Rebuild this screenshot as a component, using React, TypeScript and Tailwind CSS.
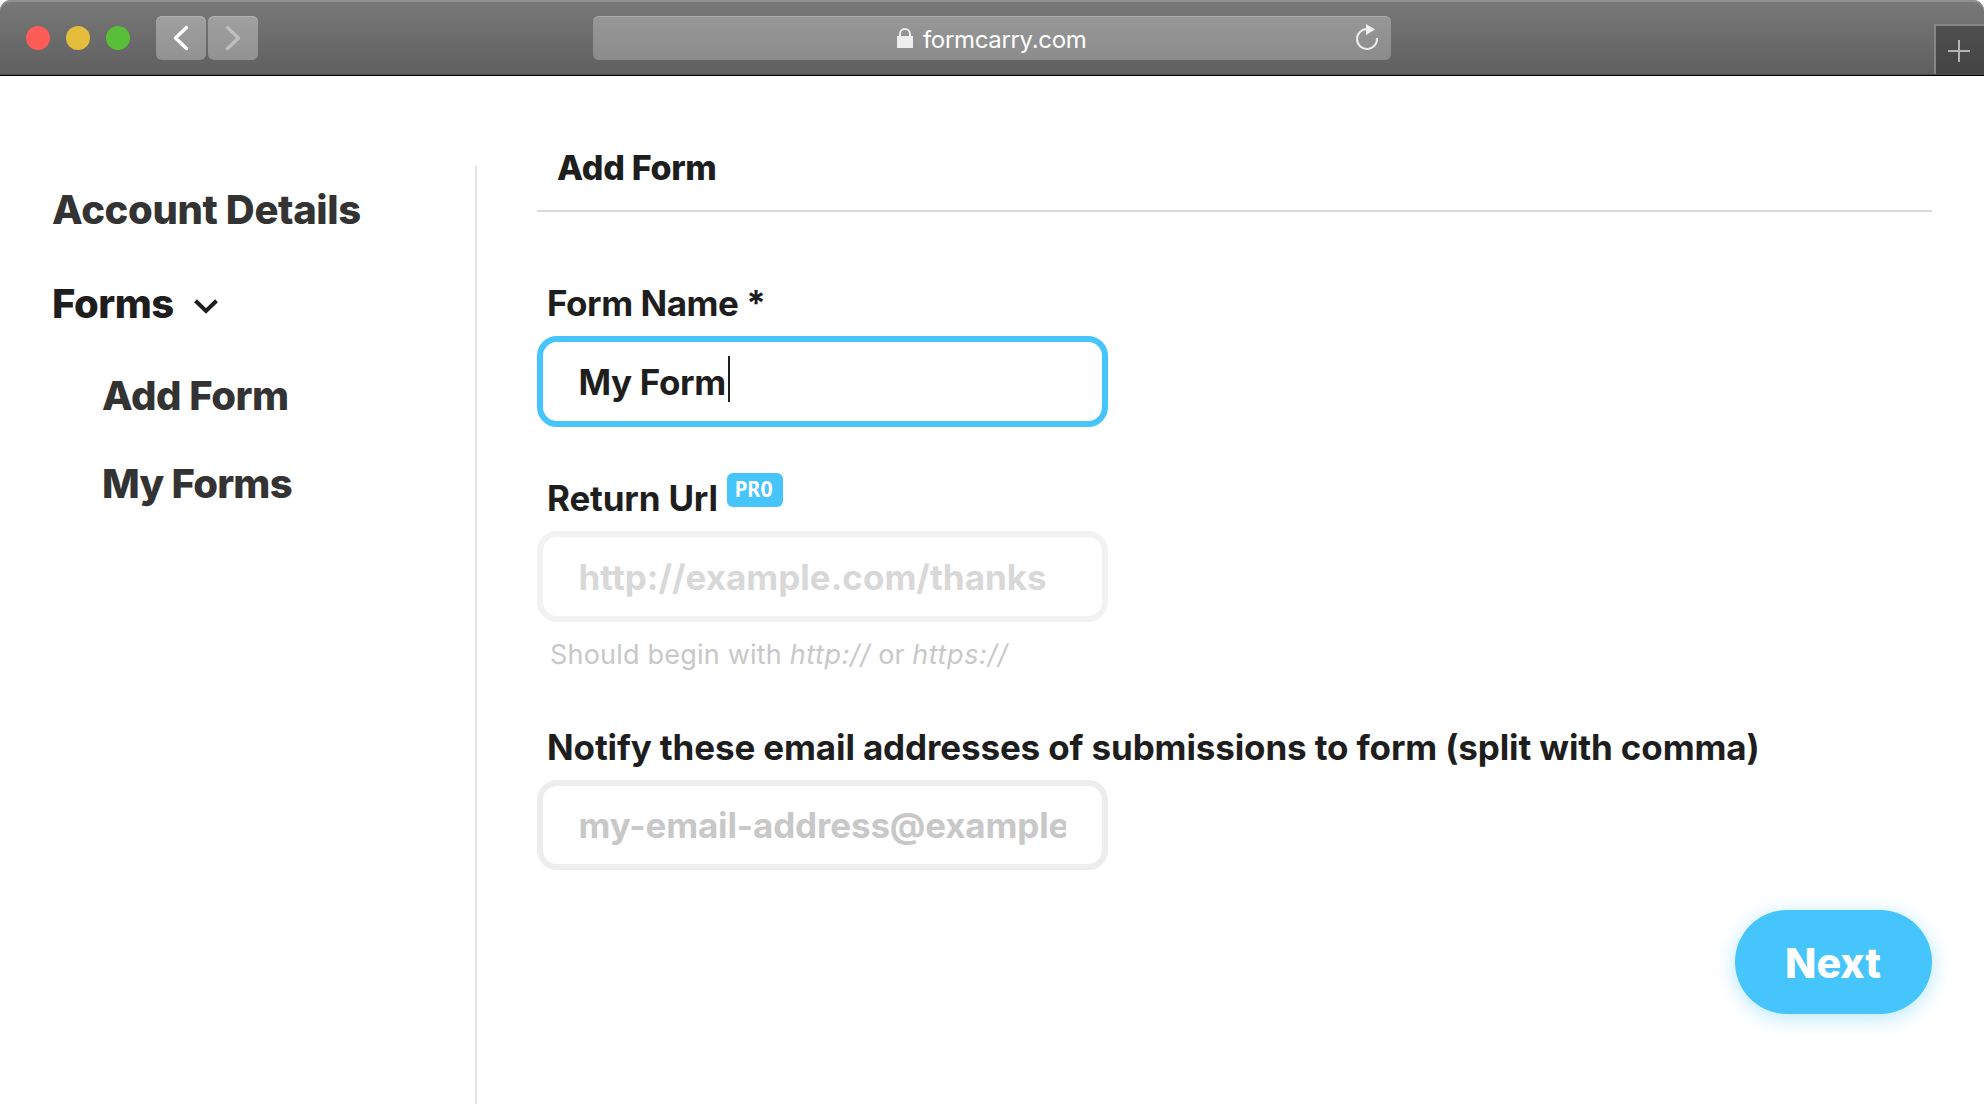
import type { ReactNode } from "react";

function BrowserBar() {
  return (
    <header className="flex h-[76px] shrink-0 items-start rounded-t-[11px] border-b border-black bg-linear-to-b from-[#797979] to-[#5f5f5f] shadow-[inset_0_2px_0_#919191,inset_0_-1px_0_#4c4c4c]">
      <div className="flex h-[76px] w-[593px] shrink-0 items-center pl-[26px]">
        <div className="flex gap-4">
          <span className="size-6 rounded-full bg-[#ff5b57]" />
          <span className="size-6 rounded-full bg-[#e4bd3c]" />
          <span className="size-6 rounded-full bg-[#57c038]" />
        </div>
        <div className="ml-[26px] flex gap-0.5">
          <NavButton color="#ffffff" d="M30.500 11.500 19.500 22 30.500 32.500" />
          <NavButton color="#bebebe" d="M19.500 11.500 30.500 22 19.500 32.500" />
        </div>
      </div>
      <div className="mt-4 flex h-11 w-[798px] shrink-0 items-center rounded-md bg-linear-to-b from-[#979797] to-[#8c8c8c] pr-3 shadow-[inset_0_1px_0_#acacac]">
        <div className="flex flex-1 items-center pl-[304px]">
          <svg width="16" height="20" viewBox="0 0 16 20">
            <path d="M3 9V6a5 5 0 0 1 10 0v3" fill="none" stroke="#eeeeee" strokeWidth="2" />
            <path d="M0 8h16v12H0z" fill="#eeeeee" />
          </svg>
          <span className="ml-2.5 pt-[3px] text-[24px] leading-[29px] tracking-[-0.33px] text-white">formcarry.com</span>
        </div>
        <svg width="24" height="28" viewBox="0 0 24 28">
          <path d="M22 14a10 10 0 1 1-10-9" fill="none" stroke="#eeeeee" strokeWidth="2" />
          <path d="M11 0v11l9-5.500z" fill="#eeeeee" />
        </svg>
      </div>
      <div className="mt-6 ml-auto flex h-[50px] w-[50px] items-center justify-center border-t-2 border-l-2 border-[#868686] bg-linear-to-b from-[#4f4f4f] to-[#444444]">
        <svg width="22" height="22" viewBox="0 0 22 22" className="mt-0.5 mr-0.5">
          <path d="M11 0v22M0 11h22" stroke="#b4b4b4" strokeWidth="2" />
        </svg>
      </div>
    </header>
  );
}

function NavButton({ color, d }: { color: string; d: string }) {
  return (
    <button className="h-11 w-[50px] rounded-md bg-linear-to-b from-[#a0a0a0] to-[#929292] shadow-[inset_0_1px_0_#b2b2b2]">
      <svg width="50" height="44" viewBox="0 0 50 44">
        <path d={d} fill="none" stroke={color} strokeWidth="3.4" strokeLinecap="round" strokeLinejoin="round" />
      </svg>
    </button>
  );
}

function Sidebar() {
  return (
    <aside className="mt-[90px] w-[477px] shrink-0 border-r-2 border-[#e3e3e3] pt-[19px] pl-[52px] text-[40px] leading-[49px] font-extrabold text-[#333333]">
      <div className="tracking-[-0.36px]">Account Details</div>
      <div className="mt-[45px] flex items-center tracking-[-0.5px] text-[#1e1e1e]">
        Forms
        <svg width="24" height="16" viewBox="0 0 24 16" className="mt-[6px] ml-[20px]">
          <path d="M1.500 1.800 12 12l10.500-10.200" fill="none" stroke="#1e1e1e" strokeWidth="4" />
        </svg>
      </div>
      <div className="mt-[43px] pl-[50px] tracking-[-0.48px]">Add Form</div>
      <div className="mt-[39px] pl-[50px] tracking-[-0.75px]">My Forms</div>
    </aside>
  );
}

function Label({ children, className }: { children: ReactNode; className: string }) {
  return (
    <div className={`flex h-[42px] pl-[10px] text-[35px] leading-[42px] font-bold whitespace-nowrap ${className}`}>
      {children}
    </div>
  );
}

function Field({ children, className }: { children: ReactNode; className: string }) {
  return (
    <div className={`mt-3 w-[571px] rounded-[20px] border-[6px] pr-9 pl-[35.500px] ${className}`}>
      <div className="flex h-full items-center overflow-hidden text-[35px] leading-[42px] font-bold whitespace-nowrap">
        {children}
      </div>
    </div>
  );
}

export default function App() {
  return (
    <div className="flex h-[1104px] w-[1984px] flex-col overflow-hidden bg-white font-['Inter','Liberation_Sans',sans-serif] text-[#1e1e1e]">
      <BrowserBar />
      <div className="flex min-h-0 flex-1">
        <Sidebar />
        <main className="ml-[60px] flex w-[1395px] flex-col pt-[71px]">
          <h1 className="h-[65px] border-b-2 border-[#dadada] pl-5 text-[34px] leading-[41px] font-extrabold tracking-[-0.3px]">
            Add Form
          </h1>

          <Label className="mt-[70px] tracking-[-0.45px]">Form Name *</Label>
          <Field className="h-[91px] border-[#45c5fb] tracking-[-0.35px]">
            My Form
            <span className="-mt-[5px] ml-[2px] h-[46px] w-0.5 bg-[#1e1e1e]" />
          </Field>

          <Label className="mt-[50px] tracking-[-0.17px]">
            Return Url
            <span className="-mt-1 ml-[9px] h-[34px] w-14 rounded-md bg-[#45c5fb] pr-0.5 text-center font-['DejaVu_Sans_Mono',monospace] text-[21px] leading-[34px] font-bold tracking-normal text-white">
              PRO
            </span>
          </Label>
          <Field className="h-[91px] border-[#f2f2f2] text-[#d8d8d8]">http://example.com/thanks</Field>
          <p className="mt-4 pl-[13px] text-[27px] leading-[33px] tracking-[0.2px] text-[#c8c8c8]">
            Should begin with <em className="tracking-[0.6px]">http://</em>
            <span className="tracking-normal"> or </span>
            <em className="tracking-[0.6px]">https://</em>
          </p>

          <Label className="mt-[55px] tracking-[-0.13px]">
            Notify these email addresses of submissions to form (split with comma)
          </Label>
          <Field className="h-[90px] border-[#ededed] tracking-[-0.15px] text-[#c8c8c8]">my-email-address@example</Field>

          <button className="mt-10 h-[104px] w-[197px] self-end rounded-full bg-[#45c5fb] pt-0.5 pr-px text-[41px] leading-[50px] font-extrabold text-white shadow-[0_4px_20px_rgba(69,197,251,0.4)]">
            Next
          </button>
        </main>
      </div>
    </div>
  );
}
